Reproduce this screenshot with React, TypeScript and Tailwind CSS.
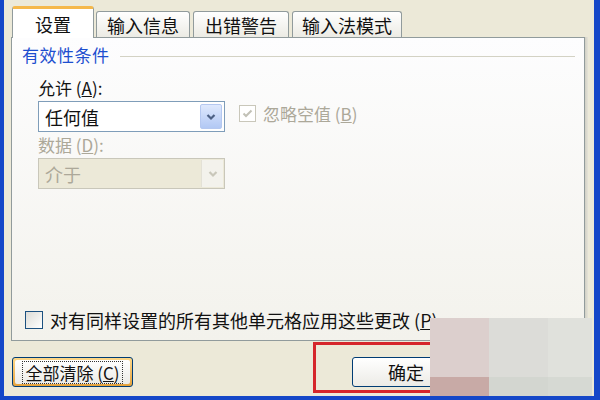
import React from 'react';

const font = { fontFamily: '"Noto Sans CJK SC", "Noto Sans", sans-serif' };

const Chevron = ({ color }: { color: string }) => (
  <svg width="10" height="8" viewBox="0 0 10 8">
    <polyline points="1.5,2 5,5.5 8.5,2" fill="none" stroke={color} strokeWidth="2.2" />
  </svg>
);

const Tab = ({ label, active, className }: { label: string; active?: boolean; className: string }) => (
  <div
    className={
      active
        ? `relative z-10 -mb-px flex items-center justify-center bg-white border border-b-0 border-[#919b9c] border-t-[3px] border-t-[#f5b84a] rounded-t-[3px] text-[18px] text-[#111] ${className}`
        : `flex items-center justify-center bg-gradient-to-b from-white to-[#ecebe4] border border-b-0 border-[#919b9c] rounded-t-[3px] text-[18px] text-[#111] ${className}`
    }
  >
    {label}
  </div>
);

export default function App() {
  return (
    <div
      style={font}
      className="relative w-[600px] h-[400px] overflow-hidden bg-[#ece9d8] border-l-4 border-r-[6px] border-b-4 border-[#1547c8] flex flex-col leading-none"
    >
      {/* tabs */}
      <div className="flex items-end h-[32px] mt-[5px] pl-[8px] gap-[2px]">
        <Tab label="设置" active className="w-[82px] h-[32px] pt-[1px]" />
        <Tab label="输入信息" className="w-[94px] h-[26px]" />
        <Tab label="出错警告" className="w-[96px] h-[26px] ml-[1px]" />
        <Tab label="输入法模式" className="w-[110px] h-[26px] ml-[1px]" />
      </div>

      {/* panel */}
      <div className="ml-[7px] w-[577px] h-[304px] flex">
        <div className="w-[574px] h-full border border-[#919b9c] bg-gradient-to-b from-[#fdfdfe] to-[#f3f2ec] flex flex-col">
          <div className="flex items-center mt-[7px] ml-[10px] mr-[9px] h-[18px]">
            <span className="text-[17px] text-[#1d4fcf] tracking-[0.5px]">有效性条件</span>
            <div className="flex-1 h-px bg-[#d3d2c4] ml-[10px] mt-[4px]" />
          </div>
          <div className="ml-[26px] mt-[16px] text-[17px] text-[#111] h-[17px]">
            允许 (<u>A</u>):
          </div>
          <div className="flex items-center ml-[26px] mt-[5px]">
            <div className="w-[187px] h-[31px] border border-[#7f9db9] bg-white flex items-center">
              <span className="flex-1 pl-[6px] text-[18px] text-[#111]">任何值</span>
              <div className="w-[22px] h-[25px] mr-[2px] rounded-[2px] border border-[#b5c8f0] bg-gradient-to-b from-[#dfe9fd] to-[#b2c8f4] flex items-center justify-center">
                <Chevron color="#4d6185" />
              </div>
            </div>
            <div className="ml-[14px] w-[17px] h-[17px] border border-[#c9c7ba] bg-white flex items-center justify-center -mt-[6px]">
              <svg width="11" height="9" viewBox="0 0 11 9">
                <polyline points="1.5,4.5 4,7 9.5,1.5" fill="none" stroke="#c2c1b6" strokeWidth="2" />
              </svg>
            </div>
            <span className="ml-[7px] text-[17px] text-[#aca899] -mt-[6px]">忽略空值 (<u>B</u>)</span>
          </div>
          <div className="ml-[26px] mt-[4px] text-[17px] text-[#aca899] h-[17px]">
            数据 (<u>D</u>):
          </div>
          <div className="ml-[26px] mt-[5px] w-[187px] h-[31px] border border-[#c9c7ba] bg-[#ece9d8] flex items-center">
            <span className="flex-1 pl-[6px] text-[18px] text-[#aca899]">介于</span>
            <div className="w-[22px] h-[27px] mr-[1px] bg-[#f3f2ec] border-l border-[#e3e1d6] flex items-center justify-center">
              <Chevron color="#c9c7ba" />
            </div>
          </div>
          <div className="flex-1" />
          <div className="flex items-center ml-[13px] mb-[11px]">
            <div className="w-[18px] h-[18px] border border-[#1c5180] bg-gradient-to-br from-[#dcdcd7] to-white" />
            <span className="ml-[7px] text-[18px] text-[#111]">对有同样设置的所有其他单元格应用这些更改 (<u>P</u>)</span>
          </div>
        </div>
        <div className="w-[3px] h-full bg-gradient-to-r from-[#d0cfc4] to-[#e5e3d8]" />
      </div>

      {/* buttons */}
      <div className="flex items-center mt-[16px] pl-[8px]">
        <div className="w-[121px] h-[30px] rounded-[3px] border border-[#003c74] bg-gradient-to-b from-[#fdd889] to-[#e5a23b] p-[2px]">
          <div className="w-full h-full rounded-[2px] bg-gradient-to-b from-white to-[#ecebe6] flex items-center justify-center">
            <div className="px-[2px] py-[2px] border border-dotted border-[#333] text-[17px] text-[#111]">全部清除 (<u>C</u>)</div>
          </div>
        </div>
        <div className="ml-[219px] w-[100px] h-[30px] rounded-[3px] border border-[#003c74] bg-gradient-to-b from-white to-[#ecebe6] flex items-center pl-[35px] text-[18px] text-[#111]">
          确定
        </div>
      </div>

      {/* red highlight */}
      <div className="absolute left-[309px] top-[342px] w-[136px] h-[51px] border-[3px] border-[#d5262b]" />

      {/* mosaic */}
      <div className="absolute left-[426px] top-[318px] grid grid-cols-[59px_59px_44px] grid-rows-[59px_19px]">
        <div className="bg-[#dccfcd]" />
        <div className="bg-[#dcdcd8]" />
        <div className="bg-[#e0e1dc]" />
        <div className="bg-[#c8aaa6]" />
        <div className="bg-[#d3d6d0]" />
        <div className="bg-[#d6d9d3]" />
      </div>
    </div>
  );
}
